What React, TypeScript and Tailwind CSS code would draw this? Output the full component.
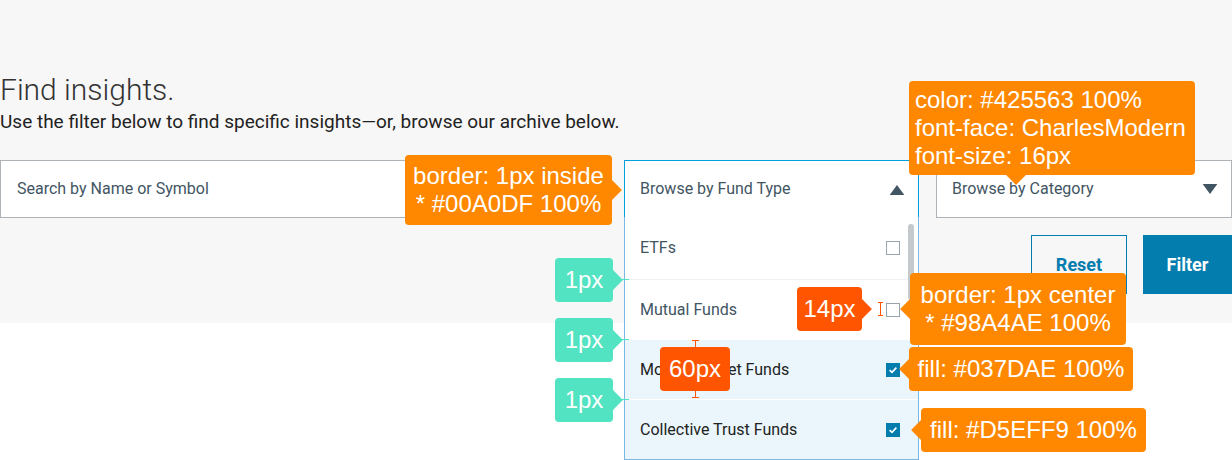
import React from 'react';

const font = { fontFamily: 'Roboto, "Noto Sans", sans-serif' };
const noteFont = { fontFamily: '"Liberation Sans", Arial, sans-serif' };

interface Option {
  label: string;
  checked: boolean;
}

const options: Option[] = [
  { label: 'ETFs', checked: false },
  { label: 'Mutual Funds', checked: false },
  { label: 'Money Market Funds', checked: true },
  { label: 'Collective Trust Funds', checked: true },
];

const Checkbox = ({ checked }: { checked: boolean }) =>
  checked ? (
    <span className="flex h-[14px] w-[14px] items-center justify-center bg-[#037DAE]">
      <svg viewBox="0 0 14 14" className="h-[14px] w-[14px]">
        <path d="M3.6 7.2 L6 9.4 L10.4 4.6" fill="none" stroke="#fff" strokeWidth="1.6" />
      </svg>
    </span>
  ) : (
    <span className="block h-[14px] w-[14px] border border-[#98A4AE] bg-white" />
  );

const Triangle = ({ up }: { up?: boolean }) => (
  <svg viewBox="0 0 16 12" className="h-[11px] w-[16px]">
    <path d={up ? 'M0 12 L8 1 L16 12 Z' : 'M0 0 L16 0 L8 11 Z'} fill="#425563" />
  </svg>
);

// redline bubble with a small pointer
const Note = ({
  className,
  children,
  arrow,
  tone = 'bg-[#FF8800]',
}: {
  className: string;
  children: React.ReactNode;
  arrow: 'left' | 'right' | 'down';
  tone?: string;
}) => (
  <div
    className={`absolute rounded-[4px] text-white text-[24px] leading-[28px] ${tone} ${className}`}
    style={noteFont}
  >
    {children}
    {arrow === 'right' && (
      <span className={`absolute right-[-7px] top-1/2 h-[14px] w-[14px] -translate-y-1/2 rotate-45 ${tone}`} />
    )}
    {arrow === 'left' && (
      <span className={`absolute left-[-7px] top-1/2 h-[14px] w-[14px] -translate-y-1/2 rotate-45 ${tone}`} />
    )}
    {arrow === 'down' && (
      <span className={`absolute bottom-[-7px] left-[100px] h-[14px] w-[14px] rotate-45 ${tone}`} />
    )}
  </div>
);

export default function App() {
  return (
    <div className="relative h-[460px] w-[1232px] overflow-hidden bg-white" style={font}>
      <div className="h-[323px] bg-[#f7f7f7] pt-[72px]">
        <h1 className="text-[30px] font-light leading-[36px] text-[#333]">Find insights.</h1>
        <p className="mt-[2px] text-[19px] leading-[24px] text-[#222]">
          Use the filter below to find specific insights—or, browse our archive below.
        </p>

        <div className="mt-[26px] flex gap-[17px]">
          <div className="flex h-[58px] w-[607px] items-center border border-[#aeb3b7] bg-white px-[16px] text-[16px] text-[#425563]">
            Search by Name or Symbol
          </div>

          <div className="relative w-[295px]">
            <div className="flex h-[58px] items-center justify-between border border-[#00A0DF] bg-white pl-[15px] pr-[13px] text-[16px] text-[#425563]">
              <span>Browse by Fund Type</span>
              <Triangle up />
            </div>
            <div className="absolute left-0 top-[57px] w-[295px] border border-t-0 border-[#78b9e6] bg-white">
              {options.map((o, i) => (
                <div
                  key={o.label}
                  className={`flex items-center justify-between pl-[15px] pr-[18px] text-[16px] ${
                    i === 0 ? 'h-[62px]' : 'h-[60px] border-t'
                  } ${o.checked ? 'border-white bg-[#EAF6FB] text-[#222]' : 'border-[#eef2f4] text-[#425563]'}`}
                >
                  <span>{o.label}</span>
                  <Checkbox checked={o.checked} />
                </div>
              ))}
              <span className="absolute right-[4px] top-[7px] h-[76px] w-[6px] rounded-full bg-[#c4c9cd]" />
            </div>
          </div>

          <div className="flex h-[58px] flex-1 items-center justify-between border border-[#aeb3b7] bg-white pl-[15px] pr-[13px] text-[16px] text-[#425563]">
            <span>Browse by Category</span>
            <Triangle />
          </div>
        </div>

        <div className="mt-[17px] flex justify-end gap-[16px]">
          <button className="h-[59px] w-[96px] border border-[#037DAE] text-[18px] font-bold text-[#037DAE]">
            Reset
          </button>
          <button className="h-[59px] w-[89px] bg-[#037DAE] text-[18px] font-bold text-white">
            Filter
          </button>
        </div>
      </div>

      {/* redline annotations */}
      <Note arrow="right" className="left-[405px] top-[155px] w-[207px] py-[7px] text-center">
        border: 1px inside
        <br />* #00A0DF 100%
      </Note>
      <Note arrow="down" className="left-[909px] top-[81px] w-[286px] py-[5px] pl-[6px]">
        color: #425563 100%
        <br />
        font-face: CharlesModern
        <br />
        font-size: 16px
      </Note>

      <Note arrow="right" tone="bg-[#52E3C2]" className="left-[555px] top-[258px] w-[58px] py-[8px] text-center">
        1px
      </Note>
      <Note arrow="right" tone="bg-[#52E3C2]" className="left-[555px] top-[318px] w-[58px] py-[8px] text-center">
        1px
      </Note>
      <Note arrow="right" tone="bg-[#52E3C2]" className="left-[555px] top-[378px] w-[58px] py-[8px] text-center">
        1px
      </Note>
      <span className="absolute left-[621px] top-[279px] h-px w-[8px] bg-[#52E3C2]" />
      <span className="absolute left-[621px] top-[339px] h-px w-[8px] bg-[#52E3C2]" />
      <span className="absolute left-[621px] top-[399px] h-px w-[8px] bg-[#52E3C2]" />

      <Note arrow="right" tone="bg-[#FF5500]" className="left-[797px] top-[287px] w-[65px] py-[8px] text-center">
        14px
      </Note>
      <span className="absolute left-[880px] top-[302px] h-[14px] w-px bg-[#FF5500]" />
      <span className="absolute left-[878px] top-[302px] h-px w-[5px] bg-[#FF5500]" />
      <span className="absolute left-[878px] top-[315px] h-px w-[5px] bg-[#FF5500]" />

      <span className="absolute left-[695px] top-[340px] h-[58px] w-px bg-[#FF5500]" />
      <span className="absolute left-[692px] top-[340px] h-px w-[7px] bg-[#FF5500]" />
      <span className="absolute left-[692px] top-[397px] h-px w-[7px] bg-[#FF5500]" />
      <div
        className="absolute left-[660px] top-[347px] w-[70px] rounded-[4px] bg-[#FF5500] py-[8px] text-center text-[24px] leading-[28px] text-white"
        style={noteFont}
      >
        60px
      </div>

      <Note arrow="left" className="left-[910px] top-[273px] w-[216px] py-[8px] text-center">
        border: 1px center
        <br />* #98A4AE 100%
      </Note>
      <Note arrow="left" className="left-[909px] top-[347px] w-[224px] py-[8px] text-center">
        fill: #037DAE 100%
      </Note>
      <Note arrow="left" className="left-[921px] top-[408px] w-[225px] py-[8px] text-center">
        fill: #D5EFF9 100%
      </Note>
    </div>
  );
}
